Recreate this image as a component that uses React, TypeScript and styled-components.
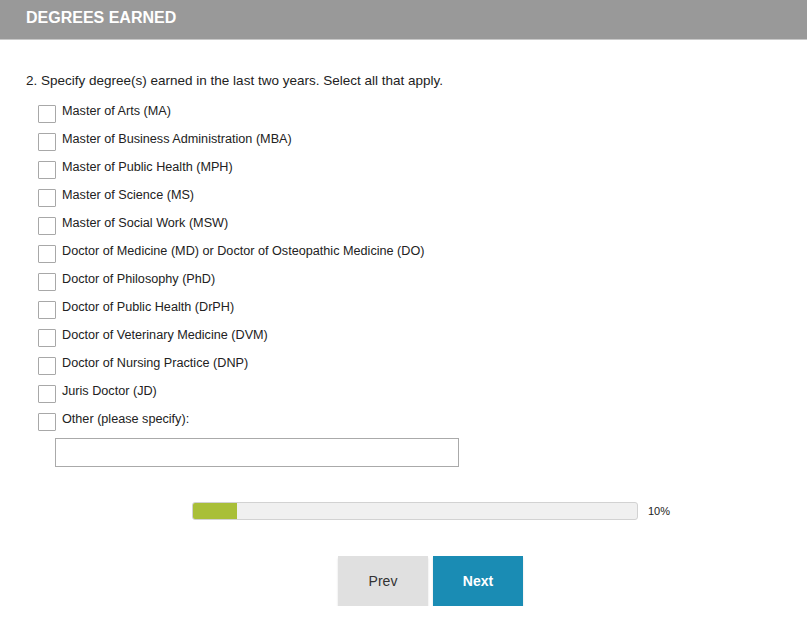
import styled, { createGlobalStyle } from 'styled-components'

const GlobalStyle = createGlobalStyle`
  body {
    margin: 0;
    background: #fff;
    font-family: 'Liberation Sans', Arial, sans-serif;
    color: #222;
  }
`

const degrees = [
  'Master of Arts (MA)',
  'Master of Business Administration (MBA)',
  'Master of Public Health (MPH)',
  'Master of Science (MS)',
  'Master of Social Work (MSW)',
  'Doctor of Medicine (MD) or Doctor of Osteopathic Medicine (DO)',
  'Doctor of Philosophy (PhD)',
  'Doctor of Public Health (DrPH)',
  'Doctor of Veterinary Medicine (DVM)',
  'Doctor of Nursing Practice (DNP)',
  'Juris Doctor (JD)',
  'Other (please specify):',
]

const progress = 10

const App = () => {
  return (
    <>
      <GlobalStyle />
      <Header>
        <HeaderTitle>DEGREES EARNED</HeaderTitle>
      </Header>
      <Content>
        <Question>2. Specify degree(s) earned in the last two years. Select all that apply.</Question>
        <OptionList>
          {degrees.map((d) => (
            <OptionRow key={d}>
              <CheckBox type="checkbox" />
              <OptionLabel>{d}</OptionLabel>
            </OptionRow>
          ))}
          <OtherInput type="text" />
        </OptionList>
        <ProgressRow>
          <ProgressTrack>
            <ProgressFill style={{ width: `${progress}%` }} />
          </ProgressTrack>
          <ProgressText>{progress}%</ProgressText>
        </ProgressRow>
        <ButtonRow>
          <NavButton>Prev</NavButton>
          <NavButton primary>Next</NavButton>
        </ButtonRow>
      </Content>
    </>
  )
}

const Header = styled.div`
  height: 39px;
  background: #999;
  border-bottom: 1px solid #c8c8c8;
  display: flex;
  align-items: center;
  padding-left: 26px;
`

const HeaderTitle = styled.h1`
  margin: -4px 0 0;
  font-size: 16px;
  font-weight: bold;
  color: #fff;
`

const Content = styled.div`
  padding: 0 26px;
`

const Question = styled.p`
  margin: 31px 0 0;
  font-size: 13.5px;
  line-height: 20px;
  color: #222;
`

const OptionList = styled.div`
  margin: 9px 0 0 12px;
`

const OptionRow = styled.label`
  display: flex;
  align-items: flex-start;
  gap: 6px;
  height: 28px;
`

const CheckBox = styled.input`
  appearance: none;
  margin: 5px 0 0;
  width: 18px;
  height: 18px;
  border: 1px solid #a8a8a8;
  border-radius: 1px;
  background: #fff;
  box-sizing: border-box;
`

const OptionLabel = styled.span`
  padding-top: 1px;
  font-size: 12.65px;
  line-height: 21px;
  color: #222;
`

const OtherInput = styled.input`
  display: block;
  margin: 2px 0 0 17px;
  width: 404px;
  height: 29px;
  box-sizing: border-box;
  border: 1px solid #aaa;
  background: #fff;
`

const ProgressRow = styled.div`
  display: flex;
  justify-content: center;
  align-items: center;
  gap: 10px;
  margin-top: 35px;
  padding-left: 54px;
`

const ProgressTrack = styled.div`
  width: 446px;
  height: 18px;
  box-sizing: border-box;
  border: 1px solid #d2d2d2;
  border-radius: 3px;
  background: #f0f0f0;
  overflow: hidden;
`

const ProgressFill = styled.div`
  height: 100%;
  background: #a9bf38;
`

const ProgressText = styled.span`
  font-size: 11px;
  color: #222;
  width: 21px;
`

const ButtonRow = styled.div`
  display: flex;
  justify-content: center;
  gap: 5px;
  margin-top: 36px;
  padding-left: 54px;
`

const NavButton = styled.button<{ primary?: boolean }>`
  width: 90px;
  height: 50px;
  border: none;
  font-family: 'Liberation Sans', Arial, sans-serif;
  font-size: 14px;
  font-weight: ${({ primary }) => (primary ? 'bold' : 'normal')};
  color: ${({ primary }) => (primary ? '#fff' : '#333')};
  background: ${({ primary }) => (primary ? '#1a8cb4' : '#e0e0e0')};
  box-shadow: 0 2px 2px rgba(0, 0, 0, 0.12);
`

export default App
